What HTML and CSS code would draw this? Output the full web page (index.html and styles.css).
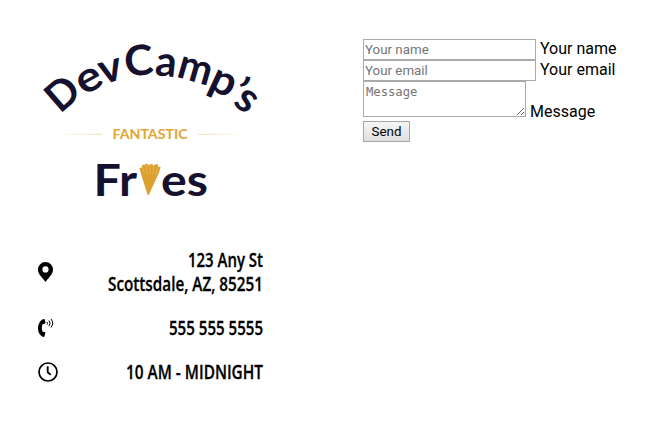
FILE: index.html
```
<!DOCTYPE html>
<html lang="en">
<head>
<meta charset="utf-8">
<title>Contact</title>
<link rel="stylesheet" href="styles.css">
</head>
<body>
<main class="contact">
  <section class="company">
    <svg class="logo" viewBox="38 39 225 164" role="img" aria-label="DevCamp's Fantastic Fries">
      <defs>
        <linearGradient id="fadeL"><stop offset="0" stop-color="#e2a52e" stop-opacity="0"/><stop offset="1" stop-color="#e2a52e" stop-opacity=".4"/></linearGradient>
        <linearGradient id="fadeR"><stop offset="0" stop-color="#e2a52e" stop-opacity=".4"/><stop offset="1" stop-color="#e2a52e" stop-opacity="0"/></linearGradient>
      </defs>
      <g class="arc">
        <text transform="translate(71.7 104.2) rotate(-41) scale(.97)">D</text>
        <text transform="translate(94.8 90) rotate(-29) scale(1.12 1)">e</text>
        <text transform="translate(113.5 81.5) rotate(-15) scale(1.05 1)">v</text>
        <text transform="translate(140 75.3) rotate(-5) scale(1.04 1)">C</text>
        <text transform="translate(164.8 76) rotate(6)">a</text>
        <text transform="translate(192 81.3) rotate(16) scale(.97 1)">m</text>
        <text transform="translate(218 93.3) rotate(25) scale(1.05 1)">p</text>
        <text transform="translate(230.5 103) rotate(35)">’</text>
        <text transform="translate(239.3 109.5) rotate(38)">s</text>
      </g>
      <rect x="56" y="133.8" width="46" height="1" fill="url(#fadeL)"/>
      <rect x="198" y="133.8" width="46" height="1" fill="url(#fadeR)"/>
      <text class="tag" x="112.5" y="139" textLength="75" lengthAdjust="spacingAndGlyphs">FANTASTIC</text>
      <text class="fries" x="93.5" y="196" textLength="43.5" lengthAdjust="spacingAndGlyphs">Fr</text>
      <text class="fries" x="161" y="196" textLength="47" lengthAdjust="spacingAndGlyphs">es</text>
      <path fill="#dda030" d="M139.3 168l3-.8-.6-2 2.8-.7.8 1.6-.2-2 3-.3.5 2 1.5-1.8 2.8.5.4 1.2 2.3-1.8 2.4.6-.2 2 2.9.6-1.8 6-2.4 5-7.7 17-1.2 0-5.3-17z"/>
      <path fill="none" stroke="#efc064" stroke-width=".6" d="M142.5 166.5l2 7M146 165l1.5 9M150 165.5v9M154 166.5l-1.5 8M157.5 168l-2 7"/>
    </svg>
    <ul class="details">
      <li class="row address">
        <svg class="icon" viewBox="0 0 20 20"><path fill-rule="evenodd" d="M7.5 0A7.5 7.5 0 0 0 0 7.5C0 11.5 2 13 7.5 20 13 13 15 11.5 15 7.5A7.5 7.5 0 0 0 7.5 0zm0 4.3a3.1 3.1 0 1 1 0 6.2 3.1 3.1 0 0 1 0-6.2z"/></svg>
        <svg class="lines" width="205" height="48"><text x="130" y="18" textLength="75" lengthAdjust="spacingAndGlyphs">123 Any St</text><text x="50" y="42" textLength="155" lengthAdjust="spacingAndGlyphs">Scottsdale, AZ, 85251</text></svg>
      </li>
      <li class="row">
        <svg class="icon" viewBox="0 0 20 20"><path d="M4.2 1.4l1.8-.4q.6 0 .8.6l.7 3q0 .6-.5.9l-2.6 1q-1.4 3.6.1 7.2l2.3.3q.7.3.5 1l-.8 3.3q-.4.8-1.1.6l-1.6-.6Q0 15.5 0 10.2 0 4.6 4.2 1.4z"/><path class="wave" d="M9 4q1 1.3 0 2.6M11 2.5q2 2.8 0 5.6M13 1q3.3 4.2 0 8.5"/></svg>
        <svg class="lines" width="205" height="24"><text x="111" y="18" textLength="94" lengthAdjust="spacingAndGlyphs">555 555 5555</text></svg>
      </li>
      <li class="row">
        <svg class="icon" viewBox="0 0 20 20"><circle class="dial" cx="10" cy="10" r="9"/><path class="hands" d="M9.7 4.3v6l3 2.4"/></svg>
        <svg class="lines" width="205" height="24"><text x="68" y="18" textLength="137" lengthAdjust="spacingAndGlyphs">10 AM - MIDNIGHT</text></svg>
      </li>
    </ul>
  </section>
  <form class="form">
    <div class="field"><input id="name" type="text" placeholder="Your name"><label for="name">Your name</label></div>
    <div class="field"><input id="email" type="email" placeholder="Your email"><label for="email">Your email</label></div>
    <div class="field message"><textarea id="message" placeholder="Message"></textarea><label for="message">Message</label></div>
    <button type="button">Send</button>
  </form>
</main>
</body>
</html>
```
FILE: styles.css
```
* { box-sizing: border-box; }
body { margin: 0; background: #fff; color: #000; font: 16px/19px Roboto, sans-serif; }
.contact { display: grid; grid-template-columns: 225px 1fr; column-gap: 100px; padding: 39px 0 0 38px; }
.logo { display: block; width: 225px; height: 164px; overflow: visible; }
.arc text { font: 700 42px Lato, sans-serif; fill: #15112f; text-anchor: middle; }
.tag { font: 700 13.5px Lato, sans-serif; fill: #e2a52e; }
.fries { font: 700 43px Lato, sans-serif; fill: #15112f; }
.details { list-style: none; margin: 46px 0 0; padding: 0; display: grid; gap: 20px; }
.row { display: flex; align-items: center; height: 24px; }
.address { height: 48px; }
.icon { width: 20px; height: 20px; flex: none; margin-bottom: 3px; }
.lines { flex: none; display: block; overflow: visible; }
.lines text { font: 600 19px "Open Sans", "Noto Sans", sans-serif; stroke: #000; stroke-width: .3; }
.wave { fill: none; stroke: #000; stroke-width: 1; }
.dial { fill: none; stroke: #000; stroke-width: 1.7; }
.hands { fill: none; stroke: #000; stroke-width: 1.8; }
.field { display: flex; height: 21px; gap: 4px; }
.field label { line-height: 19px; }
.message { height: 40px; }
.message label { padding-top: 21px; }
input, textarea { margin: 0; border: 1px solid #a9a9a9; border-radius: 0; background: #fff; outline: 0; }
input { width: 173px; height: 21px; padding: 1px; font: 13.333px Roboto, sans-serif; }
textarea { width: 163px; height: 36px; padding: 2px; font: 12.2px/16px "DejaVu Sans Mono", monospace; resize: both; }
::placeholder { color: #757575; opacity: 1; }
button { display: block; width: 47px; height: 21px; margin: 0; padding: 0; border: 1px solid #a6a6a6; border-radius: 0; background: linear-gradient(#f6f6f6, #dedede); color: #000; font: 13.333px Roboto, sans-serif; }
```
